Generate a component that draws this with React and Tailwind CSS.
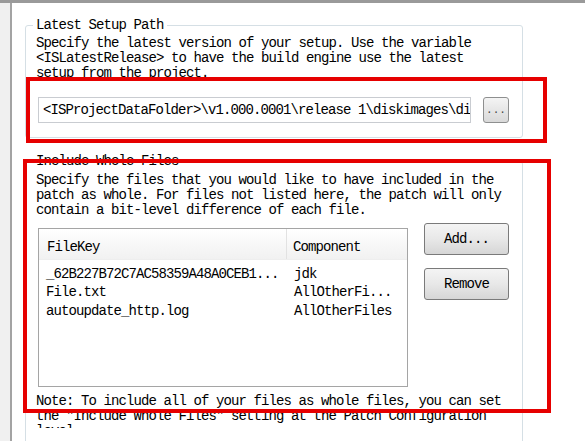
export default function App() {
  const rows = [
    ["_62B227B72C7AC58359A48A0CEB1...", "jdk"],
    ["File.txt", "AllOtherFi..."],
    ["autoupdate_http.log", "AllOtherFiles"],
  ];
  return (
    <div className="relative w-[585px] h-[441px] overflow-hidden bg-white text-black font-['Liberation_Mono',monospace] text-[14px] leading-[15px] tracking-[-0.9px]">
      <div className="h-[3px] bg-[#9a9a9a]" />
      <div className="flex h-[438px]">
        <div className="w-[12px] shrink-0 bg-[#f0f0f0] border-r-2 border-[#a3a3a3]" />
        <div className="flex flex-col">
          <fieldset className="ml-[13px] mt-[15px] w-[498px] border border-[#d5dfe5] rounded-[3px]">
            <legend className="ml-[7px] px-[3px]">Latest Setup Path</legend>
            <div className="pl-[10px] pr-[12px] pb-[14px]">
              <div className="mt-[3px] whitespace-pre">
                <div>Specify the latest version of your setup. Use the variable</div>
                <div>&lt;ISLatestRelease&gt; to have the build engine use the latest</div>
                <div>setup from the project.</div>
              </div>
              <div className="mt-[16px] flex items-center">
                <div className="ml-[2px] w-[433px] h-[26px] border border-[#c9ccd1] bg-white flex items-center pl-[4px] whitespace-pre overflow-hidden">
                  &lt;ISProjectDataFolder&gt;\v1.000.0001\release 1\diskimages\di
                </div>
                <div className="ml-[12px] w-[26px] h-[26px] rounded-[3px] border border-[#8e8f8f] bg-gradient-to-b from-[#f4f4f4] to-[#d9d9d9] flex items-end justify-center pb-[6px] text-[11px] leading-[11px] tracking-[0px] text-[#444]">
                  ...
                </div>
              </div>
            </div>
          </fieldset>

          <fieldset className="ml-[13px] mt-[16px] w-[498px] border border-[#d5dfe5] rounded-[3px]">
            <legend className="ml-[7px] px-[3px]">Include Whole Files</legend>
            <div className="pl-[10px] pr-[12px] pb-[40px]">
              <div className="mt-[4px] whitespace-pre">
                <div>Specify the files that you would like to have included in the</div>
                <div>patch as whole. For files not listed here, the patch will only</div>
                <div>contain a bit-level difference of each file.</div>
              </div>
              <div className="mt-[5px] flex items-start">
                <div className="ml-[2px] mt-[5px] w-[370px] h-[159px] border border-[#a5a5a5] bg-white flex flex-col">
                  <div className="flex h-[31px] bg-gradient-to-b from-[#ffffff] to-[#f1f1f1] border-b border-[#eeeeee]">
                    <div className="w-[248px] border-r border-[#e2e2e2] pl-[8px] pt-[6px] flex items-center">FileKey</div>
                    <div className="pl-[6px] pt-[6px] flex items-center">Component</div>
                  </div>
                  <div className="pt-[5px]">
                    {rows.map((r) => (
                      <div key={r[0]} className="flex h-[18.5px] items-center whitespace-pre">
                        <div className="w-[249px] pl-[7px]">{r[0]}</div>
                        <div className="pl-[6px]">{r[1]}</div>
                      </div>
                    ))}
                  </div>
                </div>
                <div className="ml-[16px] flex flex-col gap-[13px]">
                  <div className="w-[85px] h-[32px] rounded-[3px] border border-[#7a7a7a] bg-gradient-to-b from-[#f4f4f4] via-[#e8e8e8] to-[#d6d6d6] flex items-center justify-center">Add...</div>
                  <div className="w-[85px] h-[32px] rounded-[3px] border border-[#7a7a7a] bg-gradient-to-b from-[#f4f4f4] via-[#e8e8e8] to-[#d6d6d6] flex items-center justify-center">Remove</div>
                </div>
              </div>
              <div className="mt-[7px] h-[34px] overflow-hidden whitespace-pre">
                <div>Note: To include all of your files as whole files, you can set</div>
                <div>the "Include Whole Files" setting at the Patch Configuration</div>
                <div>level.</div>
              </div>
            </div>
          </fieldset>
        </div>
      </div>

      <div className="absolute left-[26px] top-[77px] w-[521px] h-[66px] border-4 border-[#e60000]" />
      <div className="absolute left-[23px] top-[159px] w-[528px] h-[254px] border-4 border-[#e60000]" />
    </div>
  );
}
